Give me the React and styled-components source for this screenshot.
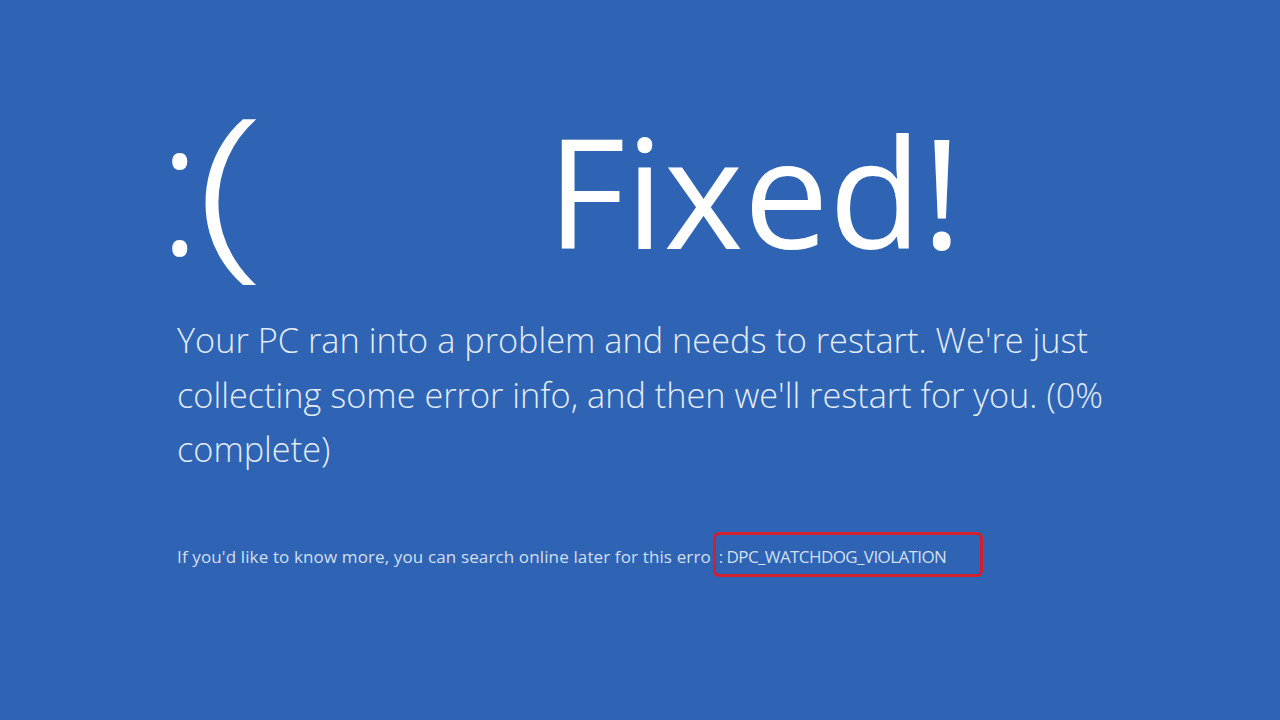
import React from "react";
import styled, { createGlobalStyle } from "styled-components";

const Global = createGlobalStyle`
  html, body { margin: 0; padding: 0; background: #2e64b3; }
  body { font-family: "Open Sans", "Noto Sans", sans-serif; }
`;

const Screen = styled.div`
  width: 1280px;
  height: 720px;
  background: #2e64b3;
  box-sizing: border-box;
  padding: 96px 0 0 170px;
  display: flex;
  flex-direction: column;
  overflow: hidden;
`;

const Header = styled.div`
  display: flex;
  align-items: flex-start;
  height: 200px;
`;

const Face = styled.div`
  display: flex;
  align-items: flex-start;
  width: 377px;
  color: #ffffff;
  font-family: "Open Sans", sans-serif;
  font-weight: 300;
  font-size: 190px;
  line-height: 1;
  margin-top: -9px;
`;

const Eyes = styled.span`
  margin-left: -13px;
`;

const Mouth = styled.span`
  display: inline-block;
  margin-left: -7px;
  transform: scaleX(1.35);
  transform-origin: left center;
`;

const Title = styled.h1`
  margin: 19px 0 0 0;
  font-family: "Open Sans", sans-serif;
  font-weight: 400;
  font-size: 152px;
  line-height: 1;
  color: #ffffff;
`;

const Message = styled.p`
  margin: 17px 0 0 7px;
  width: 1000px;
  font-family: "Open Sans", sans-serif;
  font-weight: 300;
  font-size: 34.3px;
  line-height: 54.5px;
  color: #e3ebf6;
`;

const Info = styled.p`
  margin: 68px 0 0 7px;
  font-family: "Open Sans", sans-serif;
  font-size: 17px;
  letter-spacing: 0.13px;
  color: #d3dff0;
  white-space: nowrap;
`;

const Highlight = styled.span`
  position: relative;
  margin-left: 8px;
  letter-spacing: -0.6px;
  &::after {
    content: "";
    position: absolute;
    left: -6px;
    top: -13px;
    right: -37px;
    bottom: -9px;
    border: 3px solid #d3202e;
    border-radius: 6px;
  }
`;

export default function App() {
  return (
    <>
      <Global />
      <Screen>
        <Header>
          <Face>
            <Eyes>:</Eyes>
            <Mouth>(</Mouth>
          </Face>
          <Title>Fixed!</Title>
        </Header>
        <Message>
          Your PC ran into a problem and needs to restart. We're just
          collecting some error info, and then we'll restart for you. (0%
          complete)
        </Message>
        <Info>
          If you'd like to know more, you can search online later for this erro
          <Highlight>: DPC_WATCHDOG_VIOLATION</Highlight>
        </Info>
      </Screen>
    </>
  );
}
